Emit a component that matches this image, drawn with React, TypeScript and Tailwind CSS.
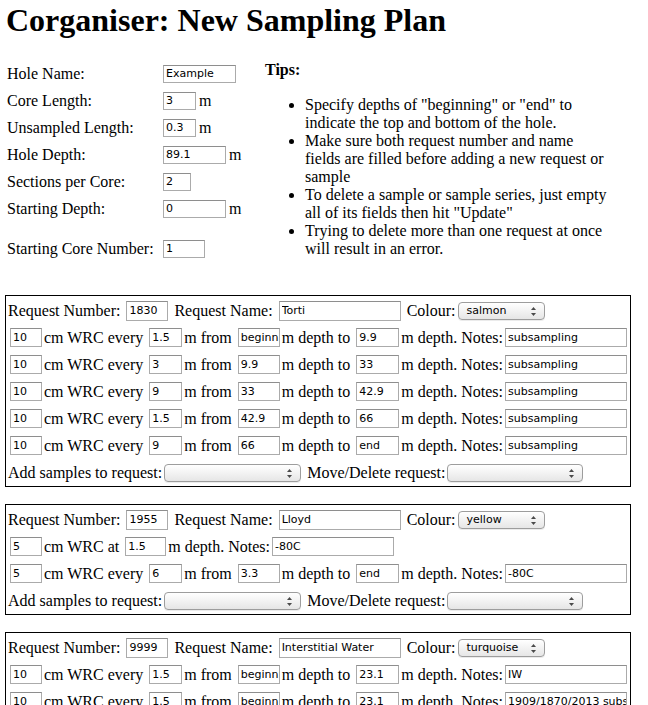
import React from "react"

type Sample =
  | { kind: "every"; size: string; every: string; from: string; to: string; notes: string }
  | { kind: "at"; size: string; at: string; notes: string }

interface Request {
  num: string
  name: string
  colour: string
  samples: Sample[]
}

const requests: Request[] = [
  {
    num: "1830",
    name: "Torti",
    colour: "salmon",
    samples: [
      { kind: "every", size: "10", every: "1.5", from: "beginning", to: "9.9", notes: "subsampling" },
      { kind: "every", size: "10", every: "3", from: "9.9", to: "33", notes: "subsampling" },
      { kind: "every", size: "10", every: "9", from: "33", to: "42.9", notes: "subsampling" },
      { kind: "every", size: "10", every: "1.5", from: "42.9", to: "66", notes: "subsampling" },
      { kind: "every", size: "10", every: "9", from: "66", to: "end", notes: "subsampling" },
    ],
  },
  {
    num: "1955",
    name: "Lloyd",
    colour: "yellow",
    samples: [
      { kind: "at", size: "5", at: "1.5", notes: "-80C" },
      { kind: "every", size: "5", every: "6", from: "3.3", to: "end", notes: "-80C" },
    ],
  },
  {
    num: "9999",
    name: "Interstitial Water",
    colour: "turquoise",
    samples: [
      { kind: "every", size: "10", every: "1.5", from: "beginning", to: "23.1", notes: "IW" },
      { kind: "every", size: "10", every: "1.5", from: "beginning", to: "23.1", notes: "1909/1870/2013 subsampling" },
    ],
  },
]

// line breaks follow the original page's wrapping
const tips = [
  ['Specify depths of "beginning" or "end" to', "indicate the top and bottom of the hole."],
  ["Make sure both request number and name", "fields are filled before adding a new request or", "sample"],
  ["To delete a sample or sample series, just empty", 'all of its fields then hit "Update"'],
  ["Trying to delete more than one request at once", "will result in an error."],
]

function T({ children }: { children: React.ReactNode }) {
  return <span className="whitespace-pre">{children}</span>
}

function Field({ value, w, h = "h-[19px]" }: { value: string; w: string; h?: string }) {
  return (
    <input
      readOnly
      value={value}
      className={`${w} ${h} mx-[2px] shrink-0 border border-[#ababab] border-t-[#8e8e8e] bg-white pl-[2px] pr-0 font-['DejaVu_Sans',sans-serif] text-[11px] text-black outline-none`}
    />
  )
}

function Sel({ value = "", w }: { value?: string; w: string }) {
  return (
    <span
      className={`${w} relative mx-[2px] flex h-[18px] shrink-0 items-center rounded-[4px] border border-[#9d9d9d] bg-gradient-to-b from-white to-[#e6e6e6] pl-[8px] font-['DejaVu_Sans',sans-serif] text-[11px] text-black shadow-[0_1px_0_rgba(0,0,0,0.08)]`}
    >
      {value}
      <svg className="absolute right-[8px] top-[4px]" width="5" height="9" viewBox="0 0 5 9">
        <path d="M2.5 0 L5 3 L0 3 Z" fill="#4a4a4a" />
        <path d="M0 6 L5 6 L2.5 9 Z" fill="#4a4a4a" />
      </svg>
    </span>
  )
}

function Row({ children }: { children: React.ReactNode }) {
  return <div className="flex h-[27px] items-center">{children}</div>
}

function SampleRow({ s }: { s: Sample }) {
  if (s.kind === "at") {
    return (
      <Row>
        <Field value={s.size} w="w-[32px]" />
        <T>cm WRC at </T>
        <Field value={s.at} w="w-[41px]" />
        <T>m depth. Notes:</T>
        <Field value={s.notes} w="w-[122px]" />
      </Row>
    )
  }
  return (
    <Row>
      <Field value={s.size} w="w-[32px]" />
      <T>cm WRC every </T>
      <Field value={s.every} w="w-[33px]" />
      <T>m from </T>
      <Field value={s.from} w="w-[42px]" />
      <T>m depth to </T>
      <Field value={s.to} w="w-[43px]" />
      <T>m depth. Notes:</T>
      <Field value={s.notes} w="w-[122px]" />
    </Row>
  )
}

function RequestBox({ r }: { r: Request }) {
  return (
    <div className="mb-[17px] w-[626px] border border-black px-[2px] pt-[1px]">
      <Row>
        <T>Request Number: </T>
        <Field value={r.num} w="w-[42px]" h="h-[20px]" />
        <T> Request Name: </T>
        <Field value={r.name} w="w-[122px]" h="h-[20px]" />
        <T> Colour:</T>
        <Sel value={r.colour} w="w-[87px]" />
      </Row>
      {r.samples.map((s, i) => (
        <SampleRow key={i} s={s} />
      ))}
      <Row>
        <T>Add samples to request:</T>
        <Sel w="w-[137px]" />
        <T> Move/Delete request:</T>
        <Sel w="w-[136px]" />
      </Row>
    </div>
  )
}

function HoleRow({ label, value, w, unit }: { label: string; value: string; w: string; unit?: boolean }) {
  return (
    <div className="flex h-[27px] items-center">
      <span className="w-[154px] shrink-0">{label}</span>
      <Field value={value} w={w} h="h-[18px]" />
      {unit && <span className="ml-[1px]">m</span>}
    </div>
  )
}

export default function App() {
  return (
    <div className="min-h-screen bg-white px-[5px] font-['Liberation_Serif','Times_New_Roman',serif] text-[16px] leading-[18px] text-black">
      <h1 className="ml-[1px] mt-[2px] text-[32px] font-bold leading-[37px]">Corganiser: New Sampling Plan</h1>

      <div className="mt-[21px] flex">
        <div className="ml-[2px] w-[258px] shrink-0">
          <HoleRow label="Hole Name:" value="Example" w="w-[73px]" />
          <HoleRow label="Core Length:" value="3" w="w-[33px]" unit />
          <HoleRow label="Unsampled Length:" value="0.3" w="w-[33px]" unit />
          <HoleRow label="Hole Depth:" value="89.1" w="w-[63px]" unit />
          <HoleRow label="Sections per Core:" value="2" w="w-[28px]" />
          <HoleRow label="Starting Depth:" value="0" w="w-[63px]" unit />
          <div className="mt-[13px]">
            <HoleRow label="Starting Core Number:" value="1" w="w-[42px]" />
          </div>
        </div>
        <div className="mt-[1px] w-[370px] shrink-0">
          <b>Tips:</b>
          <ul className="mt-[17px] list-disc whitespace-nowrap pl-[40px]">
            {tips.map((lines, i) => (
              <li key={i}>
                {lines.map((l, j) => (
                  <React.Fragment key={j}>
                    {j > 0 && <br />}
                    {l}
                  </React.Fragment>
                ))}
              </li>
            ))}
          </ul>
        </div>
      </div>

      <div className="mt-[33px]">
        {requests.map((r) => (
          <RequestBox key={r.num} r={r} />
        ))}
      </div>
    </div>
  )
}
